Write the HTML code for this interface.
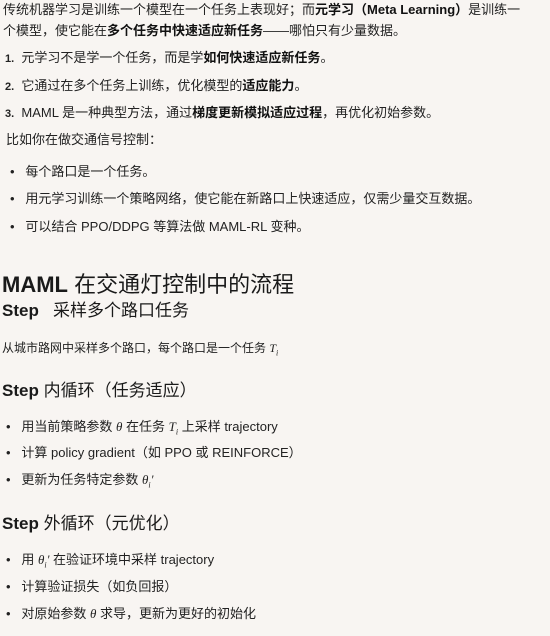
<!DOCTYPE html>
<html><head><meta charset="utf-8"><style>
body{margin:0;width:550px;height:636px;background:#f8f5f2;color:#222;font-family:"Liberation Sans","Noto Sans CJK SC",sans-serif;overflow:hidden;position:relative}
.l{position:absolute;white-space:nowrap;font-size:13px;line-height:20px}
b{font-weight:700;color:#111}
.n{position:absolute;font-weight:700;font-size:12px}
.d{position:absolute;left:11px;font-size:13px}
i{font-family:"Liberation Serif",serif}
.h{position:absolute;white-space:nowrap;color:#1a1a1a}
</style></head><body>
<div class="l" style="left:3px;top:0">传统机器学习是训练一个模型在一个任务上表现好；而<b>元学习（Meta Learning）</b>是训练一</div>
<div class="l" style="left:3px;top:21px">个模型，使它能在<b>多个任务中快速适应新任务</b>——哪怕只有少量数据。</div>
<div class="l" style="left:5px;top:48px"><span style="font-weight:700;font-size:11px">1.</span>&nbsp;&nbsp;元学习不是学一个任务，而是学<b>如何快速适应新任务</b>。</div>
<div class="l" style="left:5px;top:76px"><span style="font-weight:700;font-size:11px">2.</span>&nbsp;&nbsp;它通过在多个任务上训练，优化模型的<b>适应能力</b>。</div>
<div class="l" style="left:5px;top:103px"><span style="font-weight:700;font-size:11px">3.</span>&nbsp;&nbsp;MAML 是一种典型方法，通过<b>梯度更新模拟适应过程</b>，再优化初始参数。</div>
<div class="l" style="left:6px;top:130px">比如你在做交通信号控制：</div>
<div class="l" style="left:10px;top:162px">•&nbsp;&nbsp;&nbsp;每个路口是一个任务。</div>
<div class="l" style="left:10px;top:189px">•&nbsp;&nbsp;&nbsp;用元学习训练一个策略网络，使它能在新路口上快速适应，仅需少量交互数据。</div>
<div class="l" style="left:10px;top:217px">•&nbsp;&nbsp;&nbsp;可以结合 PPO/DDPG 等算法做 MAML-RL 变种。</div>
<div class="h" style="left:2px;top:270px;font-size:22px;line-height:30px"><b style="color:#1a1a1a">MAML</b> 在交通灯控制中的流程</div>
<div class="h" style="left:2px;top:299px;font-size:17px;line-height:24px"><b style="color:#1a1a1a">Step</b>&nbsp;&nbsp; 采样多个路口任务</div>
<div class="l" style="left:2px;top:338px;font-size:12px">从城市路网中采样多个路口，每个路口是一个任务 <i>T<sub style="font-size:8px">i</sub></i></div>
<div class="h" style="left:2px;top:379px;font-size:17px;line-height:24px"><b style="color:#1a1a1a">Step</b> 内循环（任务适应）</div>
<div class="l" style="left:6px;top:417px">•&nbsp;&nbsp;&nbsp;用当前策略参数 <i>θ</i> 在任务 <i>T<sub style="font-size:8px">i</sub></i> 上采样 trajectory</div>
<div class="l" style="left:6px;top:443px">•&nbsp;&nbsp;&nbsp;计算 policy gradient（如 PPO 或 REINFORCE）</div>
<div class="l" style="left:6px;top:470px">•&nbsp;&nbsp;&nbsp;更新为任务特定参数 <i>θ<sub style="font-size:8px">i</sub>'</i></div>
<div class="h" style="left:2px;top:512px;font-size:17px;line-height:24px"><b style="color:#1a1a1a">Step</b> 外循环（元优化）</div>
<div class="l" style="left:6px;top:550px">•&nbsp;&nbsp;&nbsp;用 <i>θ<sub style="font-size:8px">i</sub>'</i> 在验证环境中采样 trajectory</div>
<div class="l" style="left:6px;top:577px">•&nbsp;&nbsp;&nbsp;计算验证损失（如负回报）</div>
<div class="l" style="left:6px;top:604px">•&nbsp;&nbsp;&nbsp;对原始参数 <i>θ</i> 求导，更新为更好的初始化</div>
</body></html>
